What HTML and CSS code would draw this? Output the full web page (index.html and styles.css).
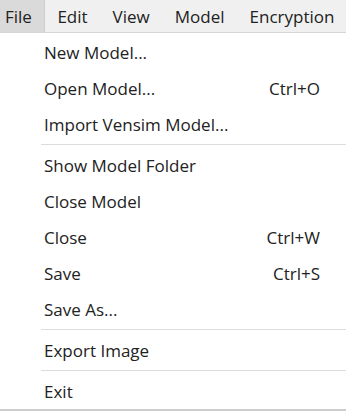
FILE: index.html
```html
<!DOCTYPE html>
<html lang="en">
<head>
    <meta charset="UTF-8">
    <title>File menu</title>
    <link rel="stylesheet" href="styles.css">
</head>
<body>
    <div class="menubar">
        <span class="menu-title open">File</span>
        <span class="menu-title">Edit</span>
        <span class="menu-title">View</span>
        <span class="menu-title">Model</span>
        <span class="menu-title">Encryption</span>
    </div>

    <ul class="dropdown">
        <li class="item"><span>New Model...</span></li>
        <li class="item"><span>Open Model...</span><span class="shortcut">Ctrl+O</span></li>
        <li class="item"><span>Import Vensim Model...</span></li>
        <li class="separator"></li>
        <li class="item"><span>Show Model Folder</span></li>
        <li class="item"><span>Close Model</span></li>
        <li class="item"><span>Close</span><span class="shortcut">Ctrl+W</span></li>
        <li class="item"><span>Save</span><span class="shortcut">Ctrl+S</span></li>
        <li class="item"><span>Save As...</span></li>
        <li class="separator"></li>
        <li class="item"><span>Export Image</span></li>
        <li class="separator"></li>
        <li class="item"><span>Exit</span></li>
    </ul>
</body>
</html>
```

FILE: styles.css
```css
body {
    margin: 0;
    background-color: #fff;
    font-family: "Open Sans", "Noto Sans", sans-serif;
    font-size: 17px;
    color: #222;
    overflow: hidden;
}
.menubar {
    display: flex;
    height: 32px;
    align-items: stretch;
    background-color: #f0f0f0;
    border-bottom: 1px solid #d6d6d6;
    white-space: nowrap;
}
.menu-title {
    display: flex;
    align-items: center;
    padding: 0 12.5px;
}
.menu-title.open {
    padding: 0 12px 0 5px;
    width: 27px;
    background-color: #dadada;
    border-right: 1px solid #cfcfcf;
}
.dropdown {
    list-style-type: none;
    margin: 0;
    padding: 1px 0 0 0;
    width: 346px;
    border-bottom: 2px solid #cdcdcd;
}
.item {
    display: flex;
    justify-content: space-between;
    align-items: center;
    height: 36px;
    padding: 0 26px 0 44px;
}
.separator {
    height: 1px;
    background-color: #dcdcdc;
    margin: 2px 0 2px 41px;
}
```
